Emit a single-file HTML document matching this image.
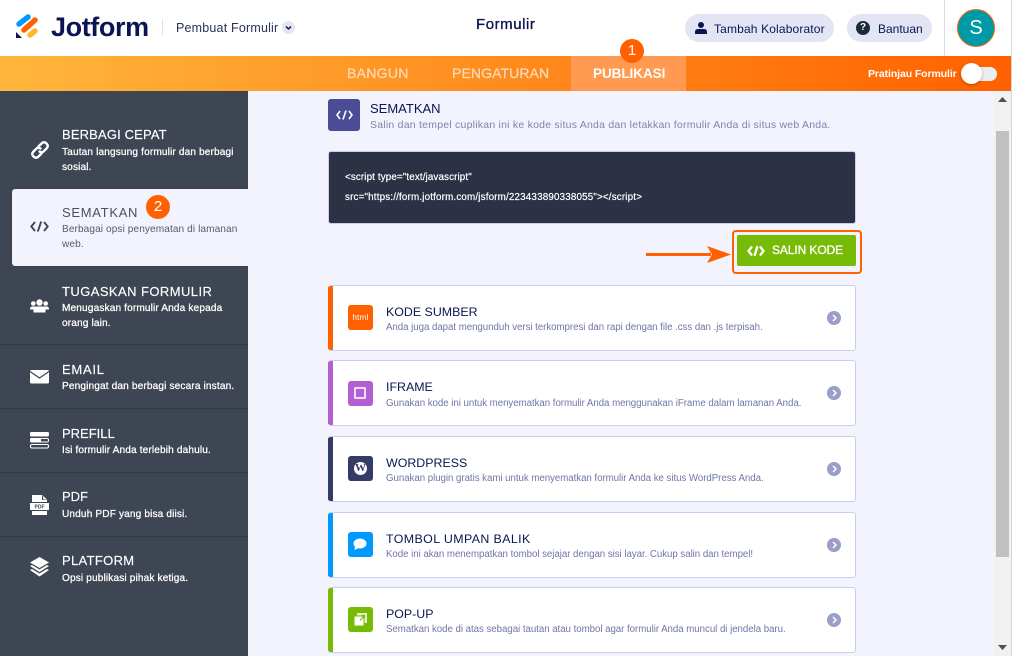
<!DOCTYPE html>
<html lang="id"><head><meta charset="utf-8"><title>Jotform</title>
<style>
html,body{margin:0;padding:0;width:1013px;height:656px;overflow:hidden;background:#fff;font-family:"Liberation Sans",sans-serif}
.a{position:absolute;white-space:nowrap}
#p{position:relative;width:1013px;height:656px;overflow:hidden}
.st{position:absolute;left:62px;color:#fff;font-size:13px;line-height:16px;white-space:nowrap;-webkit-text-stroke:.15px #fff}
.sd{position:absolute;left:62px;color:#fff;font-size:10.1px;line-height:15px;white-space:nowrap;letter-spacing:.14px;-webkit-text-stroke:.25px #fff}
.sep{position:absolute;left:0;width:248px;height:1px;background:#333a46}
.card{position:absolute;left:328px;width:528px;height:66px;box-sizing:border-box;background:#fff;border:1px solid #c8ceed;border-left:none;border-radius:3px;overflow:hidden}
.bar{position:absolute;left:0;top:-1px;bottom:-1px;width:5px}
.ic{position:absolute;left:348px;width:25px;height:25px;border-radius:3px}
.ct{position:absolute;left:386px;color:#0a1551;font-size:12.4px;line-height:16px;white-space:nowrap}
.cd{position:absolute;left:386px;color:#6f76a7;font-size:9.7px;line-height:13px;white-space:nowrap;letter-spacing:-.035px}
.arr{position:absolute;left:827px;width:14px;height:14px;border-radius:50%;background:#9a9ec9}
svg{position:absolute;display:block;overflow:visible}
</style></head><body><div id="p">

<!-- header -->
<div class="a" style="left:0;top:0;width:1011px;height:56px;background:#fff"></div>
<svg style="left:16px;top:14px" width="23" height="25" viewBox="0 0 23 25">
<path d="M3 10 L12 3" stroke="#0099ff" stroke-width="5.500" stroke-linecap="round"/>
<path d="M8 16 L19 6" stroke="#ff6100" stroke-width="5.500" stroke-linecap="round"/>
<path d="M14 21 L19 17" stroke="#ffb629" stroke-width="5.500" stroke-linecap="round"/>
<path d="M0 18 L6 24 L0 24 Z" fill="#0a1551"/>
</svg>
<div class="a" style="left:51px;top:10px;font-size:27px;line-height:34px;font-weight:bold;color:#0a1551;letter-spacing:-.4px">Jotform</div>
<div class="a" style="left:162px;top:19px;width:1px;height:17px;background:#dfe1ef"></div>
<div class="a" style="left:176px;top:20px;font-size:12.5px;line-height:16px;color:#2a3156;letter-spacing:.19px">Pembuat Formulir</div>
<div class="a" style="left:282px;top:21px;width:13px;height:13px;border-radius:50%;background:#e3e5f5"></div>
<svg style="left:282px;top:21px" width="13" height="13"><path d="M4 5.500 L6.500 8 L9 5.500" fill="none" stroke="#0a1551" stroke-width="1.500"/></svg>
<div class="a" style="left:476px;top:16px;font-size:15px;line-height:18px;color:#0a1551;letter-spacing:.55px;-webkit-text-stroke:.35px #0a1551">Formulir</div>

<div class="a" style="left:685px;top:14px;width:149px;height:28px;border-radius:14px;background:#e3e5f5"></div>
<svg style="left:695px;top:22px" width="12" height="12"><circle cx="6" cy="3" r="3" fill="#0a1551"/><path d="M0 12 V10 Q0 7 3 7 H9 Q12 7 12 10 V12 Z" fill="#0a1551"/></svg>
<div class="a" style="left:714px;top:21px;font-size:12px;line-height:16px;color:#0a1551;letter-spacing:.15px">Tambah Kolaborator</div>
<div class="a" style="left:847px;top:14px;width:85px;height:28px;border-radius:14px;background:#e3e5f5"></div>
<div class="a" style="left:856px;top:21px;width:14px;height:14px;border-radius:50%;background:#1d2a3a;color:#fff;font-size:10px;line-height:14px;font-weight:bold;text-align:center">?</div>
<div class="a" style="left:878px;top:21px;font-size:12px;line-height:16px;color:#0a1551;letter-spacing:0">Bantuan</div>
<div class="a" style="left:944px;top:0;width:1px;height:56px;background:#dcdce0"></div>
<div class="a" style="left:957px;top:9px;width:38px;height:38px;box-sizing:border-box;border-radius:50%;background:#0099a8;border:1px solid #ff6100;color:#fff;font-size:20px;line-height:36px;text-align:center">S</div>

<!-- orange nav -->
<div class="a" style="left:0;top:56px;width:1011px;height:35px;background:linear-gradient(90deg,#ffb63c 0%,#ff6100 100%)"></div>
<div class="a" style="left:571px;top:56px;width:115px;height:35px;background:#ff9a50"></div>
<div class="a" style="left:347px;top:65px;font-size:14px;line-height:16px;color:#ffdcb8;letter-spacing:.3px;-webkit-text-stroke:.25px #ffdcb8">BANGUN</div>
<div class="a" style="left:452px;top:65px;font-size:14px;line-height:16px;color:#ffdcb8;letter-spacing:.1px;-webkit-text-stroke:.25px #ffdcb8">PENGATURAN</div>
<div class="a" style="left:593px;top:66px;font-size:13.500px;line-height:16px;font-weight:bold;color:#fff;letter-spacing:-.05px">PUBLIKASI</div>
<div class="a" style="left:620px;top:39px;width:24px;height:24px;border-radius:50%;background:#ff6100;color:#fff;font-size:15px;line-height:24px;text-align:center">1</div>
<div class="a" style="left:868px;top:67px;font-size:10.500px;line-height:14px;font-weight:bold;color:#fff;letter-spacing:-.1px">Pratinjau Formulir</div>
<div class="a" style="left:962px;top:67px;width:35px;height:14px;border-radius:7px;background:#e9eeee"></div>
<div class="a" style="left:961px;top:63px;width:21px;height:21px;border-radius:50%;background:#fff;box-shadow:0 1px 3px rgba(0,0,0,.3)"></div>

<!-- sidebar -->
<div class="a" style="left:0;top:91px;width:248px;height:565px;background:#3f4653"></div>
<div class="a" style="left:12px;top:189px;width:236px;height:77px;background:#f3f3fe;border-radius:3px 0 0 3px;box-shadow:0 0 1px #222"></div>
<div class="sep" style="top:344px"></div><div class="sep" style="top:408px"></div><div class="sep" style="top:472px"></div><div class="sep" style="top:536px"></div>

<svg style="left:30px;top:140px" width="20" height="20" viewBox="0 0 20 20" fill="none" stroke="#fff" stroke-width="2.400" stroke-linecap="round"><path d="M8.500 6.500 L11.500 3.500 Q14 1 16.500 3.500 Q19 6 16.500 8.500 L13.500 11.500 Q11.500 13 9.500 11.500"/><path d="M11.500 13.500 L8.500 16.500 Q6 19 3.500 16.500 Q1 14 3.500 11.500 L6.500 8.500 Q8.500 7 10.500 8.500"/></svg>
<div class="st" style="top:127px;letter-spacing:.15px">BERBAGI CEPAT</div>
<div class="sd" style="top:145px">Tautan langsung formulir dan berbagi</div>
<div class="sd" style="top:160px">sosial.</div>

<svg style="left:30px;top:220px" width="19" height="13" viewBox="0 0 19 13" fill="none" stroke="#3f4653" stroke-width="1.900"><path d="M5 2 L1.300 6.500 L5 11"/><path d="M14 2 L17.700 6.500 L14 11"/><path d="M11.200 1.500 L7.800 11.500"/></svg>
<div class="st" style="top:205px;color:#4a5162;letter-spacing:.7px;-webkit-text-stroke:0">SEMATKAN</div>
<div class="sd" style="top:222px;color:#545b6d;-webkit-text-stroke:0;letter-spacing:.09px">Berbagai opsi penyematan di lamanan</div>
<div class="sd" style="top:237px;color:#545b6d;-webkit-text-stroke:0">web.</div>
<div class="a" style="left:146px;top:195px;width:24px;height:24px;border-radius:50%;background:#ff6100;color:#fff;font-size:15px;line-height:24px;text-align:center">2</div>

<svg style="left:30px;top:299px" width="19" height="14" viewBox="0 0 19 14" fill="#fff"><circle cx="9.500" cy="3.500" r="3.200"/><circle cx="3.300" cy="4.500" r="2.300"/><circle cx="15.700" cy="4.500" r="2.300"/><path d="M0 10 Q0 7.500 3 7.500 H16 Q19 7.500 19 10 V10.500 H15.500 V13.500 H3.500 V10.500 H0 Z"/></svg>
<div class="st" style="top:284px;letter-spacing:.43px">TUGASKAN FORMULIR</div>
<div class="sd" style="top:301px">Menugaskan formulir Anda kepada</div>
<div class="sd" style="top:316px">orang lain.</div>

<svg style="left:30px;top:370px" width="19" height="14" viewBox="0 0 19 14"><rect width="19" height="13.500" rx="1.500" fill="#fff"/><path d="M0 1.500 L9.500 8 L19 1.500" fill="none" stroke="#3f4653" stroke-width="1.200"/></svg>
<div class="st" style="top:362px;letter-spacing:.75px">EMAIL</div>
<div class="sd" style="top:379px">Pengingat dan berbagi secara instan.</div>

<svg style="left:30px;top:432px" width="19" height="17" viewBox="0 0 19 17"><rect width="19" height="4.500" rx="1.200" fill="#fff"/><rect x=".5" y="6.500" width="18" height="3.500" rx="1.500" fill="none" stroke="#fff"/><rect y="6" width="11" height="4.500" rx="1.200" fill="#fff"/><rect x=".5" y="12.500" width="18" height="3.500" rx="1.500" fill="none" stroke="#fff"/></svg>
<div class="st" style="top:426px">PREFILL</div>
<div class="sd" style="top:443px">Isi formulir Anda terlebih dahulu.</div>

<svg style="left:30px;top:495px" width="19" height="20" viewBox="0 0 19 20"><path d="M2 0 H12 L17 5 V7 H2 Z" fill="#fff"/><path d="M12 0.500 V5 H17" fill="#3f4653"/><path d="M13.200 1 L17 4.500 H13.200 Z" fill="#fff"/><rect y="8" width="19" height="7" fill="#fff"/><rect x="2" y="16" width="15" height="4" fill="#fff"/><text x="9.500" y="13.500" font-size="5" font-weight="bold" text-anchor="middle" fill="#3f4653" font-family="Liberation Sans">PDF</text></svg>
<div class="st" style="top:489px">PDF</div>
<div class="sd" style="top:507px">Unduh PDF yang bisa diisi.</div>

<svg style="left:30px;top:557px" width="19" height="20" viewBox="0 0 19 20" fill="#fff"><path d="M9.500 0 L19 5.500 L9.500 11 L0 5.500 Z"/><path d="M0 9 L2 8 L9.500 12.500 L17 8 L19 9 L9.500 15 Z"/><path d="M0 13 L2 12 L9.500 16.500 L17 12 L19 13 L9.500 19.500 Z"/></svg>
<div class="st" style="top:553px;letter-spacing:.33px">PLATFORM</div>
<div class="sd" style="top:571px">Opsi publikasi pihak ketiga.</div>

<!-- content -->
<div class="a" style="left:248px;top:91px;width:746px;height:565px;background:#f3f3fe"></div>
<div class="a" style="left:328px;top:99px;width:32px;height:32px;border-radius:3px;background:#4c4b95"></div>
<svg style="left:336px;top:110px" width="17" height="10" viewBox="0 0 17 10" fill="none" stroke="#fff" stroke-width="1.600"><path d="M4 1 L1 5 L4 9"/><path d="M13 1 L16 5 L13 9"/><path d="M10 .5 L7 9.500"/></svg>
<div class="a" style="left:370px;top:101px;font-size:13px;line-height:16px;color:#0a1551">SEMATKAN</div>
<div class="a" style="left:370px;top:118px;font-size:10.500px;line-height:14px;color:#7d83ae;letter-spacing:.23px">Salin dan tempel cuplikan ini ke kode situs Anda dan letakkan formulir Anda di situs web Anda.</div>

<div class="a" style="left:328px;top:151px;width:528px;height:73px;box-sizing:border-box;background:#2c3145;border:1px solid #c8ceed;border-radius:3px"></div>
<div class="a" style="left:345px;top:171px;font-size:9.800px;line-height:13px;color:#fff;letter-spacing:.13px;-webkit-text-stroke:.2px #fff">&lt;script type="text/javascript"</div>
<div class="a" style="left:345px;top:191px;font-size:9.800px;line-height:13px;color:#fff;letter-spacing:.18px;-webkit-text-stroke:.2px #fff">src="https://form.jotform.com/jsform/223433890338055"&gt;&lt;/script&gt;</div>

<div class="a" style="left:646px;top:253px;width:65px;height:3px;background:#ff6100"></div>
<svg style="left:707px;top:246px" width="24" height="17"><path d="M0 0 L24 8.500 L0 17 L5 8.500 Z" fill="#ff6100"/></svg>
<div class="a" style="left:732px;top:230px;width:130px;height:44px;box-sizing:border-box;border:2px solid #ff6100;border-radius:4px"></div>
<div class="a" style="left:737px;top:235px;width:119px;height:31px;background:#78bb07;border-radius:2px"></div>
<svg style="left:747px;top:245px" width="18" height="12" viewBox="0 0 18 12" fill="none" stroke="#fff" stroke-width="2.300"><path d="M5 1.500 L1.500 6 L5 10.500"/><path d="M13 1.500 L16.500 6 L13 10.500"/><path d="M10.500 1 L7.500 11"/></svg>
<div class="a" style="left:772px;top:243px;font-size:12px;line-height:15px;color:#fff;letter-spacing:-.1px;-webkit-text-stroke:.3px #fff">SALIN KODE</div>

<!-- cards -->
<div class="card" style="top:285px"><div class="bar" style="background:#ff6100"></div></div>
<div class="ic" style="top:305px;background:#ff6100;color:#fff;font-size:8px;line-height:26px;text-align:center;letter-spacing:.2px">html</div>
<div class="ct" style="top:304px">KODE SUMBER</div>
<div class="cd" style="top:321px">Anda juga dapat mengunduh versi terkompresi dan rapi dengan file .css dan .js terpisah.</div>
<div class="arr" style="top:311px"></div>

<div class="card" style="top:360px"><div class="bar" style="background:#b35fd3"></div></div>
<div class="ic" style="top:381px;background:#b35fd3"></div>
<div class="a" style="left:354px;top:387px;width:12px;height:12px;box-sizing:border-box;border:2px solid #f1ddf8;border-radius:1px"></div>
<div class="ct" style="top:379px">IFRAME</div>
<div class="cd" style="top:397px">Gunakan kode ini untuk menyematkan formulir Anda menggunakan iFrame dalam lamanan Anda.</div>
<div class="arr" style="top:386px"></div>

<div class="card" style="top:436px"><div class="bar" style="background:#343c66"></div></div>
<div class="ic" style="top:456px;background:#343c66"></div>
<div class="a" style="left:354px;top:462px;width:13px;height:13px;border-radius:50%;background:#fff;color:#343c66;font-family:'Liberation Serif',serif;font-size:11px;line-height:13px;text-align:center;font-weight:bold">W</div>
<div class="ct" style="top:455px">WORDPRESS</div>
<div class="cd" style="top:472px">Gunakan plugin gratis kami untuk menyematkan formulir Anda ke situs WordPress Anda.</div>
<div class="arr" style="top:462px"></div>

<div class="card" style="top:512px"><div class="bar" style="background:#0099ff"></div></div>
<div class="ic" style="top:532px;background:#0099ff"></div>
<svg style="left:353px;top:538px" width="14" height="13"><ellipse cx="7" cy="5.500" rx="6.500" ry="5" fill="#fff"/><path d="M2 8 L1.500 12 L6 10 Z" fill="#fff"/></svg>
<div class="ct" style="top:531px;letter-spacing:.4px">TOMBOL UMPAN BALIK</div>
<div class="cd" style="top:548px">Kode ini akan menempatkan tombol sejajar dengan sisi layar. Cukup salin dan tempel!</div>
<div class="arr" style="top:538px"></div>

<div class="card" style="top:587px"><div class="bar" style="background:#78bb07"></div></div>
<div class="ic" style="top:607px;background:#78bb07"></div>
<svg style="left:354px;top:613px" width="13" height="13"><rect x="3" y="0" width="10" height="10" fill="#e6f4cc"/><rect x="0" y="3" width="10" height="10" fill="#fff" stroke="#78bb07"/><path d="M6 7.500 L10.500 2.500 M7.500 2.500 H10.500 V5.500" stroke="#78bb07" stroke-width="1.200" fill="none"/></svg>
<div class="ct" style="top:606px">POP-UP</div>
<div class="cd" style="top:623px">Sematkan kode di atas sebagai tautan atau tombol agar formulir Anda muncul di jendela baru.</div>
<div class="arr" style="top:613px"></div>

<svg style="left:827px;top:311px" width="14" height="14"><path d="M6 4 L9 7 L6 10" fill="none" stroke="#fff" stroke-width="1.500"/></svg>
<svg style="left:827px;top:386px" width="14" height="14"><path d="M6 4 L9 7 L6 10" fill="none" stroke="#fff" stroke-width="1.500"/></svg>
<svg style="left:827px;top:462px" width="14" height="14"><path d="M6 4 L9 7 L6 10" fill="none" stroke="#fff" stroke-width="1.500"/></svg>
<svg style="left:827px;top:538px" width="14" height="14"><path d="M6 4 L9 7 L6 10" fill="none" stroke="#fff" stroke-width="1.500"/></svg>
<svg style="left:827px;top:613px" width="14" height="14"><path d="M6 4 L9 7 L6 10" fill="none" stroke="#fff" stroke-width="1.500"/></svg>

<!-- scrollbar -->
<div class="a" style="left:994px;top:91px;width:17px;height:565px;background:#f1f1f1"></div>
<div class="a" style="left:996px;top:131px;width:13px;height:426px;background:#c1c1c1"></div>
<svg style="left:998px;top:97px" width="9" height="6"><path d="M0 5 L4.500 0 L9 5 Z" fill="#505050"/></svg>
<svg style="left:998px;top:645px" width="9" height="6"><path d="M0 0 L4.500 5 L9 0 Z" fill="#505050"/></svg>
<div class="a" style="left:1011px;top:0;width:1px;height:656px;background:#d6d6d6"></div>
<div class="a" style="left:1012px;top:0;width:1px;height:656px;background:#fff"></div>
</div></body></html>
